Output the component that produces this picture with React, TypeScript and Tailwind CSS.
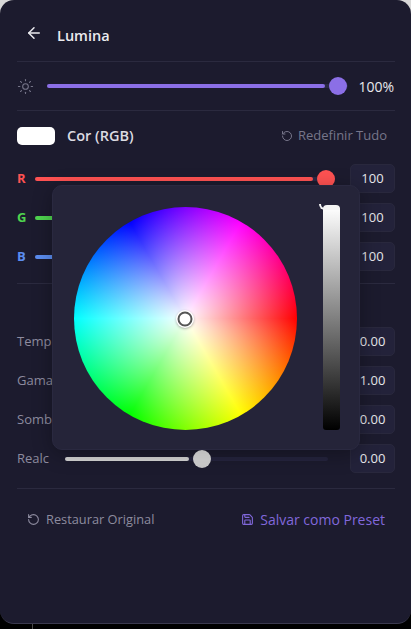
import { ArrowLeft, RotateCcw, Save, Sun } from "lucide-react";

function Track({ fill, color, thumb, track = "bg-[#2a2944]" }: { fill: string; color: string; thumb: string; track?: string }) {
  return (
    <div className={`relative h-[4px] flex-1 rounded-full ${track}`}>
      <div className={`absolute left-0 top-0 h-full rounded-full ${color} ${fill}`} />
      <div className={`absolute top-1/2 size-[18px] -translate-x-1/2 -translate-y-1/2 rounded-full ${thumb}`} style={{ left: "var(--t)" }} />
    </div>
  );
}

function NumBox({ v }: { v: string }) {
  return (
    <div className="flex h-[29px] w-[45px] shrink-0 items-center justify-center rounded-[5px] border border-[#29283d] bg-[#23223a] text-[13px] text-[#e6e6ea]">
      {v}
    </div>
  );
}

function RgbRow({ label, text, color }: { label: string; text: string; color: string }) {
  return (
    <div className="flex h-[29px] items-center">
      <span className={`w-[18px] text-[13px] font-bold ${text}`}>{label}</span>
      <div className="mr-[15px] flex flex-1 items-center [--t:291px]">
        <Track fill="w-[278px]" color={color} thumb={color} />
      </div>
      <NumBox v="100" />
    </div>
  );
}

function ToneRow({ label, v }: { label: string; v: string }) {
  return (
    <div className="flex h-[29px] items-center">
      <span className="w-[48px] text-[13px] text-[#8d8b9f]">{label}</span>
      <div className="mr-[22px] flex flex-1 items-center [--t:137px]">
        <Track
          fill="w-[124px]"
          color="bg-[#d6d6d6]"
          thumb="bg-[linear-gradient(#ececec,#c8c8c8)]"
          track="bg-[#25243e]"
        />
      </div>
      <NumBox v={v} />
    </div>
  );
}

export default function App() {
  return (
    <div className="relative h-[629px] w-[411px] overflow-hidden bg-[linear-gradient(#d8d8d8_0,#d8d8d8_20px,#000_20px)] font-['Open_Sans','Noto_Sans',sans-serif]">
      <div className="absolute left-[32px] top-[623px] h-[6px] w-px bg-[#4a4a4a]" />
      <div className="relative h-[624px] rounded-[14px] border-b border-[#3a394e] bg-[#1c1b2e] pl-[17px] pr-[16px]">
        <header className="flex h-[62px] items-center border-b border-[#2b2a3f] pl-[8px] pt-[11px]">
          <ArrowLeft className="mb-[6px] size-[18px] text-[#ebebef]" strokeWidth={2} />
          <span className="ml-[14px] text-[14.5px] font-semibold text-[#ebebef]">Lumina</span>
        </header>

        <section className="flex h-[49px] items-center border-b border-[#2b2a3f] pr-[1px]">
          <Sun className="size-[17px] text-[#77768a]" strokeWidth={1.5} />
          <div className="ml-[13px] flex flex-1 items-center [--t:291px]">
            <Track fill="w-[278px]" color="bg-[#8b6fe6]" thumb="bg-[#8b6fe6]" />
          </div>
          <span className="ml-[10px] text-[14px] text-[#e8e8ec]">100%</span>
        </section>

        <section className="flex h-[49px] items-center">
          <div className="h-[18px] w-[38px] rounded-[5px] bg-white" />
          <span className="ml-[12px] text-[14.5px] font-semibold text-[#dcdce2]">Cor (RGB)</span>
          <div className="ml-auto flex items-center pr-[8px] text-[13px] text-[#77768a]">
            <RotateCcw className="mr-[5px] size-[12px]" />
            Redefinir Tudo
          </div>
        </section>

        <div className="flex flex-col gap-[10px] pt-[4px]">
          <RgbRow label="R" text="text-[#ff5252]" color="bg-[#ff5252]" />
          <RgbRow label="G" text="text-[#4fd44f]" color="bg-[#4fd44f]" />
          <RgbRow label="B" text="text-[#5b8df0]" color="bg-[#5b8df0]" />
        </div>

        <div className="mt-[12px] flex flex-col gap-[10px] border-t border-[#2b2a3f] pt-[43px]">
          <ToneRow label="Temp" v="0.00" />
          <ToneRow label="Gama" v="1.00" />
          <ToneRow label="Somb" v="0.00" />
          <ToneRow label="Realc" v="0.00" />
        </div>

        <footer className="mt-[15px] flex h-[62px] items-center border-t border-[#2b2a3f] px-[10px] text-[12.8px]">
          <RotateCcw className="mr-[6px] size-[13px] text-[#8d8b9f]" />
          <span className="text-[#8d8b9f]">Restaurar Original</span>
          <Save className="ml-auto mr-[6px] size-[13px] text-[#8168dc]" />
          <span className="text-[14px] text-[#8168dc]">Salvar como Preset</span>
        </footer>
      </div>

      <div className="absolute left-[52px] top-[185px] flex h-[265px] w-[308px] rounded-[10px] border border-[#2a2940] bg-[#252439] pl-[20.5px] pt-[21px] shadow-[0_4px_20px_#0000004d]">
        <div className="relative size-[223px] rounded-full bg-[radial-gradient(closest-side,#fff,#fff0),conic-gradient(from_90deg,#f00,#ff0,#0f0,#0ff,#00f,#f0f,#f00)]">
          <div className="absolute left-1/2 top-1/2 size-[15px] -translate-x-1/2 -translate-y-1/2 rounded-full border-[2px] border-[#555] bg-white shadow-[0_0_0_1.5px_#fff,0_1px_3px_1px_#0006]" />
        </div>
        <div className="relative ml-[26.5px] h-[223px] w-[17px] rounded-[3px] bg-[linear-gradient(#fff,#000)]">
          <div className="absolute left-0 -top-[2px] h-[5px] w-[17px] rounded-t-[4px] bg-[#f4f4f4]" />
          <div className="absolute -left-[4px] -top-[3px] h-[6px] w-[6px] rounded-bl-[6px] border-b-2 border-l-2 border-[#f4f4f4]" />
        </div>
      </div>
    </div>
  );
}
